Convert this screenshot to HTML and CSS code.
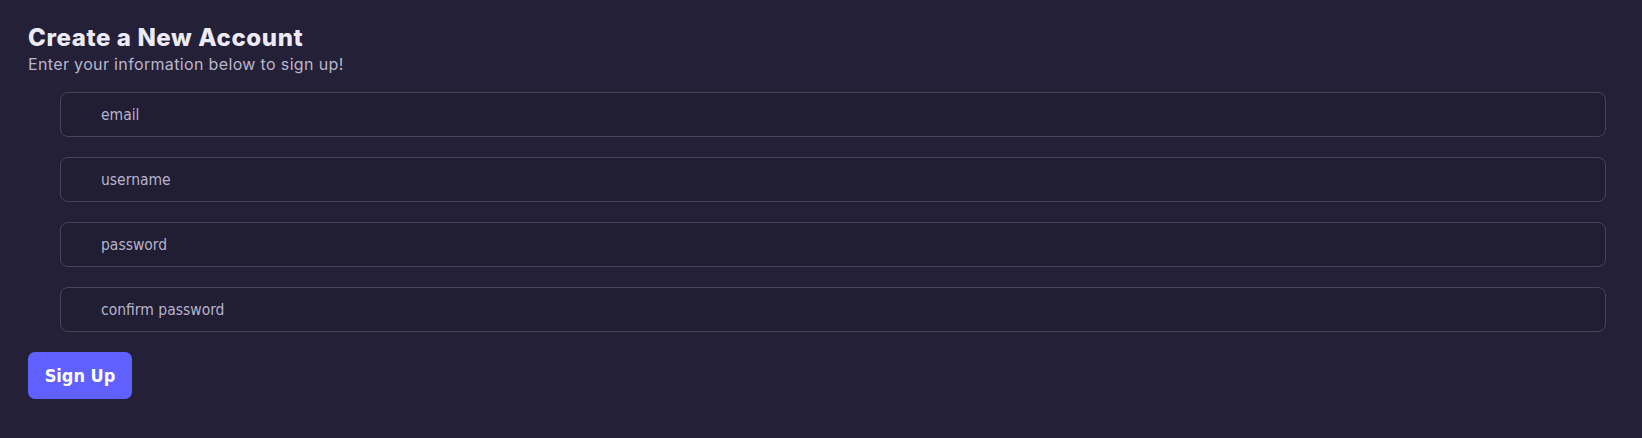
FILE: index.html
```html
<!DOCTYPE html>
<html lang="en">
<head>
<meta charset="utf-8">
<title>Create a New Account</title>
<link rel="stylesheet" href="styles.css">
</head>
<body>
<main class="page">
  <header class="head">
    <h1 class="title">Create a New Account</h1>
    <p class="subtitle">Enter your information below to sign up!</p>
  </header>
  <form class="form">
    <div class="fields">
      <input class="field" type="email" placeholder="email">
      <input class="field" type="text" placeholder="username">
      <input class="field" type="password" placeholder="password">
      <input class="field" type="password" placeholder="confirm password">
    </div>
    <button class="btn" type="button">Sign Up</button>
  </form>
</main>
</body>
</html>
```

FILE: styles.css
```css
html, body {
  margin: 0;
  padding: 0;
  background: #242038;
  height: 100%;
}
.page {
  padding: 22px 28px;
  box-sizing: border-box;
}
.head {
  display: flex;
  flex-direction: column;
}
.title {
  margin: 0;
  font-family: "Inter", "Lato", sans-serif;
  font-weight: 800;
  font-size: 24px;
  line-height: 32px;
  color: #ecebf5;
  letter-spacing: 0.6px;
}
.subtitle {
  margin: 0;
  font-family: "Inter", sans-serif;
  font-weight: 400;
  font-size: 16px;
  line-height: 21px;
  color: #b9b6cc;
  letter-spacing: 0.35px;
}
.form {
  display: flex;
  flex-direction: column;
  align-items: flex-start;
  gap: 20px;
  margin-top: 17px;
}
.fields {
  display: flex;
  flex-direction: column;
  gap: 20px;
  align-self: stretch;
  margin: 0 8px 0 32px;
}
.field {
  height: 45px;
  box-sizing: border-box;
  border: 1px solid #48455a;
  border-radius: 8px;
  background: #211d33;
  padding: 0 0 0 40px;
  font-family: "DejaVu Sans Condensed", "DejaVu Sans", sans-serif;
  font-size: 15.5px;
  color: #c3c0d6;
  outline: none;
}
.field::placeholder {
  color: #b6b3cc;
  opacity: 1;
}
.btn {
  width: 104px;
  height: 47px;
  border: none;
  border-radius: 7px;
  background: #6060ff;
  color: #ffffff;
  font-family: "DejaVu Sans Condensed", "DejaVu Sans", sans-serif;
  font-weight: 700;
  font-size: 18px;
  cursor: pointer;
  padding: 0;
}
```
